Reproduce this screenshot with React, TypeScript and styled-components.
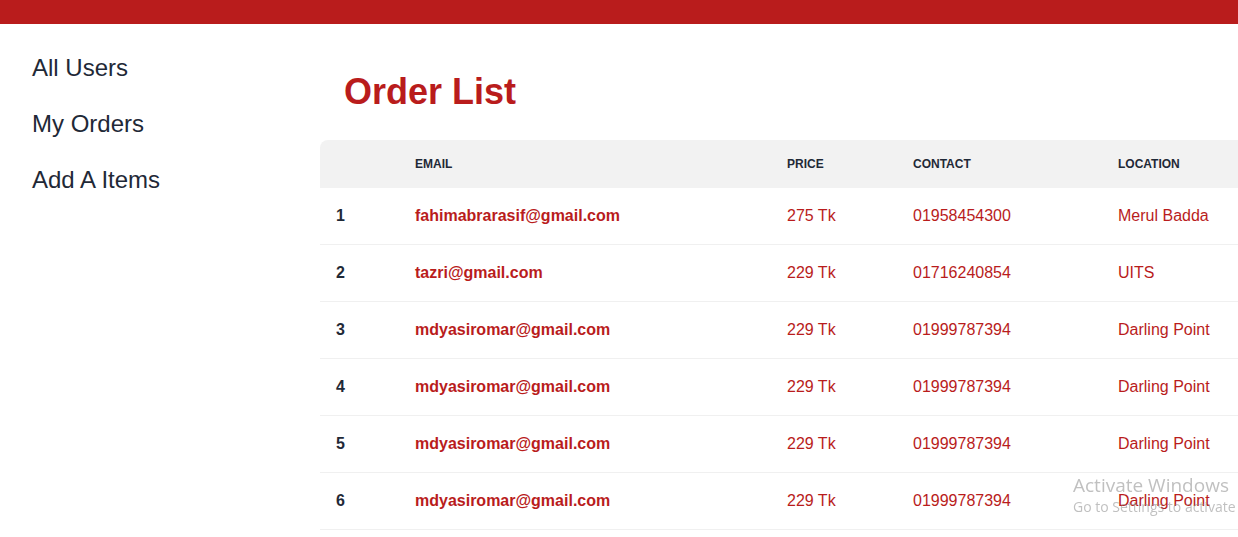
import React from "react";
import styled, { createGlobalStyle } from "styled-components";

const GlobalStyle = createGlobalStyle`
  html, body {
    margin: 0;
    padding: 0;
    background: #ffffff;
    overflow: hidden;
    font-family: "Liberation Sans", Arial, sans-serif;
  }
  * { box-sizing: border-box; }
`;

const TopBar = styled.div`
  height: 24px;
  background: #b91c1c;
`;

const Layout = styled.div`
  display: flex;
  width: 1340px;
`;

const Sidebar = styled.nav`
  width: 320px;
  flex: none;
  padding: 16px 16px;
  display: flex;
  flex-direction: column;
`;

const NavLink = styled.a`
  display: block;
  padding: 16px 16px 12px;
  height: 56px;
  font-size: 24px;
  line-height: 28px;
  color: #1f2937;
  text-decoration: none;
  margin-top: ${(p: { $first?: boolean }) => (p.$first ? "-2px" : "0")};
`;

const Main = styled.main`
  flex: 1;
  display: flex;
  flex-direction: column;
`;

const Title = styled.h1`
  margin: 48px 0 0 24px;
  height: 68px;
  font-size: 36px;
  line-height: 40px;
  font-weight: 700;
  color: #b91c1c;
`;

const Table = styled.table`
  border-collapse: separate;
  border-spacing: 0;
  width: 100%;
  table-layout: fixed;
`;

const HeadCell = styled.th<{ $w: number; $first?: boolean }>`
  width: ${(p) => p.$w}px;
  background: #f2f2f2;
  padding: 16px 16px;
  height: 48px;
  text-align: left;
  font-size: 12px;
  line-height: 16px;
  font-weight: 700;
  text-transform: uppercase;
  color: #1f2937;
  border-top-left-radius: ${(p) => (p.$first ? "8px" : "0")};
`;

type Tone = "num" | "email" | "plain";

const Cell = styled.td<{ $tone: Tone }>`
  padding: 16px 16px;
  height: 57px;
  font-size: 16px;
  line-height: 24px;
  border-bottom: 1px solid #f0f0f0;
  white-space: nowrap;
  font-weight: ${(p) => (p.$tone === "plain" ? 400 : 700)};
  color: ${(p) => (p.$tone === "num" ? "#1f2937" : "#b91c1c")};
`;

const Watermark = styled.div`
  position: fixed;
  left: 1073px;
  top: 473px;
  pointer-events: none;
  font-family: "Open Sans", "DejaVu Sans", sans-serif;
  color: rgba(140, 140, 140, 0.55);
  white-space: nowrap;
`;

const WmTitle = styled.div`
  font-size: 19px;
  line-height: 24px;
`;

const WmSub = styled.div`
  font-size: 14px;
  line-height: 20px;
`;

const orders = [
  { email: "fahimabrarasif@gmail.com", price: "275 Tk", contact: "01958454300", location: "Merul Badda" },
  { email: "tazri@gmail.com", price: "229 Tk", contact: "01716240854", location: "UITS" },
  { email: "mdyasiromar@gmail.com", price: "229 Tk", contact: "01999787394", location: "Darling Point" },
  { email: "mdyasiromar@gmail.com", price: "229 Tk", contact: "01999787394", location: "Darling Point" },
  { email: "mdyasiromar@gmail.com", price: "229 Tk", contact: "01999787394", location: "Darling Point" },
  { email: "mdyasiromar@gmail.com", price: "229 Tk", contact: "01999787394", location: "Darling Point" },
];

export default function App() {
  return (
    <>
      <GlobalStyle />
      <TopBar />
      <Layout>
        <Sidebar>
          <NavLink $first>All Users</NavLink>
          <NavLink>My Orders</NavLink>
          <NavLink>Add A Items</NavLink>
        </Sidebar>
        <Main>
          <Title>Order List</Title>
          <Table>
            <thead>
              <tr>
                <HeadCell $w={79} $first></HeadCell>
                <HeadCell $w={372}>Email</HeadCell>
                <HeadCell $w={126}>Price</HeadCell>
                <HeadCell $w={205}>Contact</HeadCell>
                <HeadCell $w={238}>Location</HeadCell>
              </tr>
            </thead>
            <tbody>
              {orders.map((o, i) => (
                <tr key={i}>
                  <Cell $tone="num">{i + 1}</Cell>
                  <Cell $tone="email">{o.email}</Cell>
                  <Cell $tone="plain">{o.price}</Cell>
                  <Cell $tone="plain">{o.contact}</Cell>
                  <Cell $tone="plain">{o.location}</Cell>
                </tr>
              ))}
            </tbody>
          </Table>
        </Main>
      </Layout>
      <Watermark>
        <WmTitle>Activate Windows</WmTitle>
        <WmSub>Go to Settings to activate Windows.</WmSub>
      </Watermark>
    </>
  );
}
